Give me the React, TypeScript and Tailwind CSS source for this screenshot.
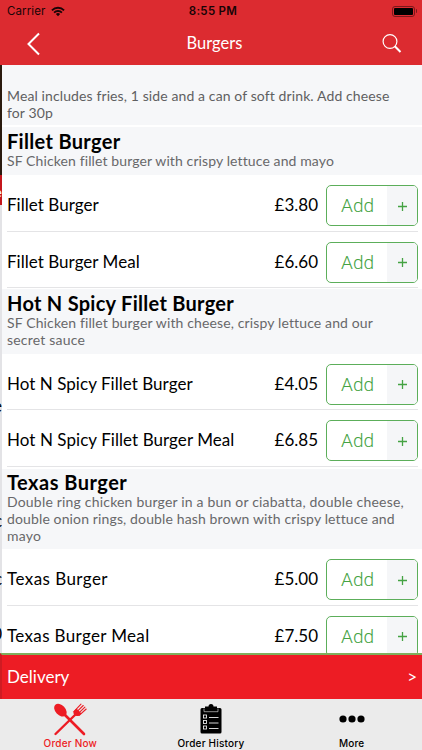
import { useState } from 'react';
import clsx from 'clsx';

type Item = { name: string; price: string; tracking: string };
type Section = { title: string; titleClass: string; headClass: string; lines: { text: string; cls: string }[]; items: Item[] };

const SECTIONS: Section[] = [
  {
    title: 'Fillet Burger',
    titleClass: 'tracking-[0.32px]',
    headClass: 'h-[50px] border-t-2 pt-[2px]',
    lines: [{ text: 'SF Chicken fillet burger with crispy lettuce and mayo', cls: 'tracking-[0.11px]' }],
    items: [
      { name: 'Fillet Burger', price: '£3.80', tracking: 'tracking-[0.04px]' },
      { name: 'Fillet Burger Meal', price: '£6.60', tracking: 'tracking-[0.03px]' },
    ],
  },
  {
    title: 'Hot N Spicy Fillet Burger',
    titleClass: 'tracking-[0.28px]',
    headClass: 'h-[65.5px] border-t pt-[2px]',
    lines: [
      { text: 'SF Chicken fillet burger with cheese, crispy lettuce and our', cls: 'tracking-[0.13px]' },
      { text: 'secret sauce', cls: 'tracking-[0.2px]' },
    ],
    items: [
      { name: 'Hot N Spicy Fillet Burger', price: '£4.05', tracking: 'tracking-[0.04px]' },
      { name: 'Hot N Spicy Fillet Burger Meal', price: '£6.85', tracking: 'tracking-[0.06px]' },
    ],
  },
  {
    title: 'Texas Burger',
    titleClass: 'tracking-[0.48px]',
    headClass: 'h-[82.5px] border-t-2 pt-px',
    lines: [
      { text: 'Double ring chicken burger in a bun or ciabatta, double cheese,', cls: 'tracking-[0.19px]' },
      { text: 'double onion rings, double hash brown with crispy lettuce and', cls: 'tracking-[0.13px]' },
      { text: 'mayo', cls: 'tracking-[0.2px]' },
    ],
    items: [
      { name: 'Texas Burger', price: '£5.00', tracking: 'tracking-[0.45px]' },
      { name: 'Texas Burger Meal', price: '£7.50', tracking: 'tracking-[0.35px]' },
    ],
  },
];

function WifiIcon() {
  return (
    <svg width="14" height="11" viewBox="0 0 15 11" fill="none" stroke="#180406" strokeWidth="2">
      <path d="M1 4.2a9.2 9.2 0 0 1 13 0" />
      <path d="M3.3 6.7a6 6 0 0 1 8.4 0" />
      <path d="M7.5 10.6 5.2 8.2a3.3 3.3 0 0 1 4.6 0z" fill="#180406" stroke="none" />
    </svg>
  );
}

function CutleryIcon() {
  return (
    <svg width="34" height="33" viewBox="0 0 34 33" fill="none" stroke="#ed1c24" strokeLinecap="round">
      <ellipse cx="7.4" cy="7.2" rx="5" ry="7.4" transform="rotate(-43 7.4 7.2)" fill="#ed1c24" stroke="none" />
      <path d="M11 11 31 31" strokeWidth="2.6" />
      <path d="M2.5 31 24 10" strokeWidth="2.4" />
      <path d="M20.5 8.2c-.6 2.6 1.2 5.2 5 4.9L28.5 10.5 23.5 5.5z" fill="#ed1c24" stroke="none" />
      <path d="M21.6 7.8 28 1.2M23.3 9.3 30.2 2.5M24.9 10.9 31.9 4.2M26.2 12.4 33.2 6" strokeWidth="1.1" />
    </svg>
  );
}

function ClipboardIcon() {
  return (
    <svg width="22" height="30" viewBox="0 0 22 30">
      <path d="M2 4h3V2.5h3.5a2.5 2.5 0 0 1 5 0H17V4h3a1.5 1.5 0 0 1 1.5 1.5v22.5A1.5 1.5 0 0 1 20 29.5H2A1.5 1.5 0 0 1 .5 28V5.5A1.5 1.5 0 0 1 2 4z" fill="#000" />
      <path d="M4 4.5v3.2h14V4.5" stroke="#ebebeb" strokeWidth=".6" fill="none" />
      {[11, 16.500, 22].map(y => (
        <g key={y} stroke="#ebebeb" fill="none">
          <rect x="3.5" y={y} width="3" height="3" strokeWidth=".9" />
          <path d={`M9 ${y + 2.5}h9.5`} strokeWidth=".9" />
        </g>
      ))}
    </svg>
  );
}

function AddButton({ onClick }: { onClick: () => void }) {
  return (
    <button onClick={onClick} className="flex h-[41px] w-[92px] shrink-0 overflow-hidden rounded-[5px] border border-[#5cae5a] bg-white text-[#45a343]">
      <span className="flex-1 pt-[6px] pl-px text-center font-['Roboto',sans-serif] text-[19px] leading-[28px] font-light">Add</span>
      <span className="flex h-full w-[30px] items-center justify-center bg-[#f5f6f8] pt-px pl-px">
        <svg width="9" height="9" viewBox="0 0 9 9" stroke="#45a343" strokeWidth="1.3">
          <path d="M4.5 0v9M0 4.5h9" />
        </svg>
      </span>
    </button>
  );
}

const TABS = [
  { key: 'order', label: 'Order Now' },
  { key: 'history', label: 'Order History' },
  { key: 'more', label: 'More' },
];

export default function App() {
  const [tab, setTab] = useState('order');
  const [, setBasket] = useState<string[]>([]);

  return (
    <div className="flex h-[750px] w-[422px] flex-col overflow-hidden bg-white font-['Lato',sans-serif] text-black">
      <header className="h-[65px] shrink-0 bg-[#dc2b30]">
        <div className="grid h-[22px] grid-cols-3 items-center pr-[5px] pl-[7px] font-['Inter',sans-serif] text-[11.5px] text-[#180406]">
          <div className="flex items-center gap-[6px]">
            <span className="pt-[2px] tracking-[0.1px]">Carrier</span>
            <WifiIcon />
          </div>
          <div className="pt-[2px] pl-[2px] text-center tracking-[0.3px] font-semibold">8:55 PM</div>
          <div className="flex items-center justify-end gap-px">
            <div className="h-[11px] w-[23px] rounded-[3px] border border-[#7a181b] p-px">
              <div className="h-full rounded-[1px] bg-black" />
            </div>
            <div className="h-[4px] w-[1.5px] rounded-r bg-[#7a181b]" />
          </div>
        </div>
        <div className="flex h-[43px] items-center justify-between pr-[20px] pl-[26px] text-white">
          <svg width="15" height="24" viewBox="0 0 15 24" fill="none" stroke="#fff" strokeWidth="2">
            <path d="M13 1.5 2.5 12 13 22.5" />
          </svg>
          <h1 className="pl-[6px] text-[16.5px]">Burgers</h1>
          <svg width="20" height="20" viewBox="0 0 20 20" fill="none" stroke="#fff">
            <circle cx="8" cy="7.5" r="6.9" strokeWidth="1.2" />
            <path d="m12.8 12.3 5.7 5.7" strokeWidth="2" />
          </svg>
        </div>
      </header>

      <div className="flex h-[588px] shrink-0">
        {/* edge of the screen underneath */}
        <div className="flex w-[2px] shrink-0 flex-col items-end overflow-hidden bg-[#e3e3e6] text-[17px]">
          <div className="h-[110px] w-full bg-[#2a1a0e]" />
          <div className="flex h-[30px] w-full justify-end bg-[#c4161c] text-[14px] leading-[34px] text-white">e</div>
          <div className="mt-[191px] h-[20px] leading-[20px]">e</div>
          <div className="mt-[95px] h-[20px] leading-[20px]">c</div>
          <div className="mt-[38px] h-[20px] leading-[20px]">c</div>
          <div className="mt-[35px] h-[20px] leading-[20px]">0</div>
        </div>
        <main className="flex-1 overflow-hidden">
          <div className="h-[60px] bg-[#f6f7f9] pt-[22px] pl-[5px] text-[14px] leading-[17px] tracking-[0.11px] text-[#5f5f61]">
            <p>Meal includes fries, 1 side and a can of soft drink. Add cheese</p>
            <p>for 30p</p>
          </div>
          {SECTIONS.map(s => (
            <section key={s.title}>
              <div className={clsx('border-white bg-[#f6f7f9] pl-[5px]', s.headClass)}>
                <h2 className={clsx('-mb-px text-[20px] leading-[24px] font-bold', s.titleClass)}>{s.title}</h2>
                {s.lines.map(l => (
                  <p key={l.text} className={clsx('w-max text-[14px] leading-[17px] text-[#68686a]', l.cls)}>{l.text}</p>
                ))}
              </div>
              {s.items.map(i => (
                <div key={i.name} className="h-[56.5px] pr-[4px] pl-[5px]">
                  <div className="flex h-full items-start border-b border-[#e4e4e6] pt-[10px]">
                    <span className={clsx('flex-1 text-[17px] leading-[40px]', i.tracking)}>{i.name}</span>
                    <span className="pr-[8px] text-[17px] leading-[40px]">{i.price}</span>
                    <AddButton onClick={() => setBasket(b => [...b, i.name])} />
                  </div>
                </div>
              ))}
            </section>
          ))}
        </main>
      </div>

      <button className="flex h-[46px] shrink-0 items-center justify-between border-t-2 border-l-2 border-t-[#7fae5c] border-l-[#cf1b22] bg-[#ed1c24] pr-[5px] pl-[5px] text-[17px] text-white">
        <span>Delivery</span>
        <span>&gt;</span>
      </button>

      <nav className="grid flex-1 grid-cols-3 bg-[#ebebeb]">
        {TABS.map(t => (
          <button key={t.key} onClick={() => setTab(t.key)} className="flex flex-col items-center">
            <span className="flex h-[37px] items-center justify-center pt-[3px]">
              {t.key === 'order' && <CutleryIcon />}
              {t.key === 'history' && <ClipboardIcon />}
              {t.key === 'more' && (
                <svg width="26" height="8" viewBox="0 0 26 8">
                  <circle cx="4" cy="4" r="3.6" />
                  <circle cx="13" cy="4" r="3.6" />
                  <circle cx="22" cy="4" r="3.6" />
                </svg>
              )}
            </span>
            <span className={clsx("pt-px font-['Inter',sans-serif] text-[10px] leading-[12px] font-medium tracking-[0.2px]", tab === t.key ? 'text-[#ed1c24]' : 'text-black')}>{t.label}</span>
          </button>
        ))}
      </nav>
    </div>
  );
}
